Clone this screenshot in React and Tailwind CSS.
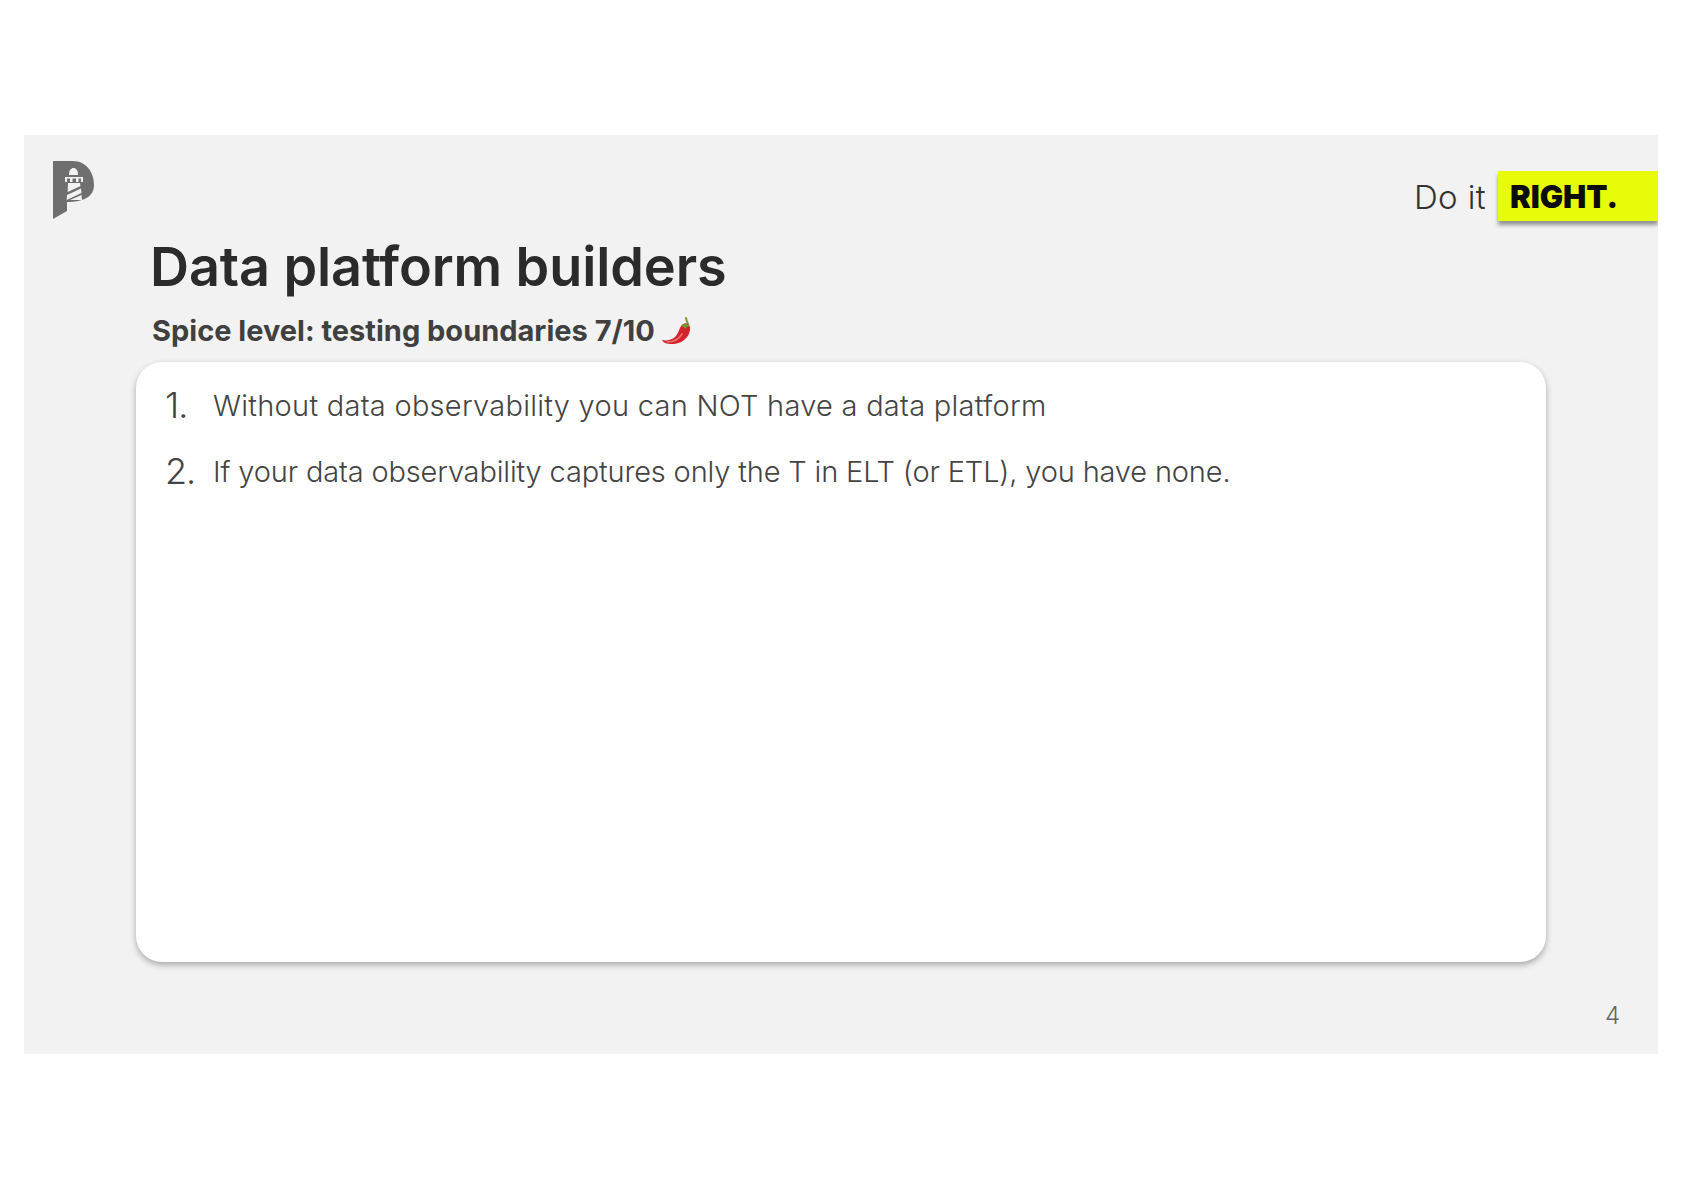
import React from 'react'

const Logo = () => (
  <svg width="41" height="59" viewBox="0 0 41 59" className="block">
    <path d="M0 0H20C33 0 41 11 41 24C41 36 30 41 14 41V50L0 58Z" fill="#6f6f6f" />
    <path d="M16 14C16 9 18 7 20.500 7C23 7 25 9 25 14Z" fill="#f2f2f2" />
    <path d="M12 16H30V21H28V17.500H25.500V21H23V17.500H19.500V21H17V17.500H14V21H12Z" fill="#f2f2f2" />
    <path d="M15 22H27L27.500 25L14.700 31Z" fill="#f2f2f2" />
    <path d="M14 34L28 27.500L28.500 32L13.700 39Z" fill="#f2f2f2" />
    <path d="M17 39L28.500 34L29 39Z" fill="#f2f2f2" />
  </svg>
)

const Chili = () => (
  <svg width="31" height="30" viewBox="0 0 31 30" className="block">
    <path d="M25 2C25.500 5 26 6 27 8" stroke="#7a9a3a" strokeWidth="2" fill="none" strokeLinecap="round" />
    <path d="M21 9C24 6 28 7 29 11C30 18 24 27 13 28C7 28.500 2 27 1 24C5 25 11 24 14 21C18 17 18 12 21 9Z" fill="#d3262c" />
    <path d="M20 10C23 6.500 28 7 29 11C27 10 25 11 24 13C23 11 22 10 20 10Z" fill="#6f9a2e" />
    <path d="M6 26C12 26 18 23 21 18" stroke="#f0716d" strokeWidth="1.500" fill="none" strokeLinecap="round" />
  </svg>
)

const items = [
  { text: 'Without data observability you can NOT have a data platform', tracking: 'tracking-[0.27px]' },
  { text: 'If your data observability captures only the T in ELT (or ETL), you have none.', tracking: 'tracking-[-0.16px]' },
]

const App = () => {
  return (
    <div className="h-[1191px] bg-white pt-[135px] pl-[24px] pr-[26px] font-['Inter',sans-serif]">
      <div className="h-[919px] bg-[#f2f2f2] flex flex-col overflow-hidden">
        {/* Header */}
        <div className="h-[100px] flex justify-between items-start">
          <div className="ml-[29px] mt-[26px]">
            <Logo />
          </div>
          <div className="mt-[36px] flex items-center">
            <span className="text-[33px] leading-none tracking-[0.4px] font-light text-[#333333] mr-[12px] pt-[2px]">Do it</span>
            <div className="w-[160px] h-[50px] bg-[#e7fc08] shadow-[0_4px_4px_rgba(0,0,0,0.4)] flex items-center pl-[12px] pt-[2px] text-[31px] font-black text-[#0c0c0c]">
              RIGHT.
            </div>
          </div>
        </div>

        <h1 className="ml-[126px] text-[54px] tracking-[-0.1px] leading-[64px] font-semibold text-[#2b2b2b]">Data platform builders</h1>
        <div className="ml-[128px] mt-[13px] h-[38px] flex items-center gap-[6px] text-[29px] font-bold text-[#404040]">
          <span>Spice level: testing boundaries 7/10</span>
          <Chili />
        </div>

        {/* Main Content Card */}
        <div className="mt-[12px] ml-[112px] w-[1410px] h-[600px] bg-white rounded-[26px] shadow-[0_3px_6px_rgba(0,0,0,0.3)] pl-[29px] pt-[22px]">
          <ol className="flex flex-col gap-[22px]">
            {items.map((item, i) => (
              <li key={i} className="flex items-center h-[44px] text-[#444444] font-light">
                <span className="w-[48px] text-[36px] tracking-[-1px] pb-[2px]">{i + 1}.</span>
                <span className={`text-[29px] ${item.tracking}`}>{item.text}</span>
              </li>
            ))}
          </ol>
        </div>

        <div className="mt-[36px] mr-[38px] text-right text-[24px] font-light text-[#666666]">4</div>
      </div>
    </div>
  )
}

export default App
